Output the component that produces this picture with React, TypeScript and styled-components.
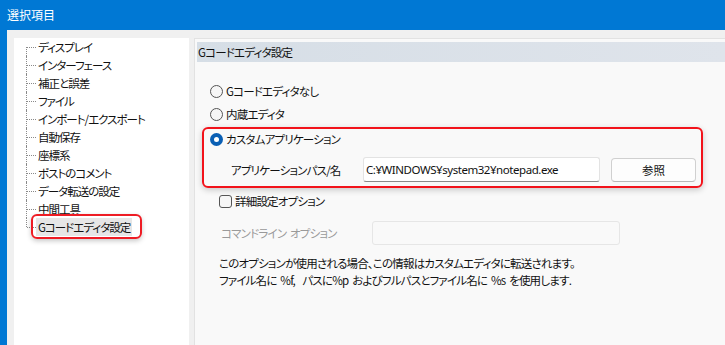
import React from "react";
import styled, { createGlobalStyle, css } from "styled-components";

const Global = createGlobalStyle`
  html, body { margin: 0; padding: 0; }
  body {
    font-family: "Noto Sans CJK JP", "Noto Sans", sans-serif;
    font-size: 11.5px;
    letter-spacing: -0.8px;
    word-spacing: 2px;
    color: #111;
    font-feature-settings: "palt";
    -webkit-font-smoothing: antialiased;
  }
`;

const Window = styled.div`
  width: 725px;
  height: 345px;
  background: #0078d4;
  display: flex;
  flex-direction: column;
  overflow: hidden;
`;

const TitleBar = styled.div`
  height: 30px;
  flex: none;
  display: flex;
  align-items: center;
  padding: 0 0 2px 7px;
  box-sizing: border-box;
  color: #fff;
  font-size: 12px;
  letter-spacing: 0;
`;

const Body = styled.div`
  flex: 1;
  margin-left: 7px;
  background: #f0f0f0;
  display: flex;
  gap: 5px;
  padding: 8px 0 0 7px;
  min-height: 0;
`;

const TreePanel = styled.div`
  width: 175px;
  flex: none;
  background: #fff;
  display: flex;
  flex-direction: column;
`;

const TreeRow = styled.div`
  height: 18px;
  display: flex;
  align-items: center;
`;

const Connector = styled.span<{ $first?: boolean; $last?: boolean }>`
  width: 22px;
  align-self: stretch;
  flex: none;
  position: relative;
  &::before {
    content: "";
    position: absolute;
    left: 12px;
    top: ${(p) => (p.$first ? "9px" : "0")};
    bottom: ${(p) => (p.$last ? "9px" : "0")};
    border-left: 1px dotted #8a8a8a;
  }
  &::after {
    content: "";
    position: absolute;
    left: 13px;
    width: 9px;
    top: 9px;
    border-top: 1px dotted #8a8a8a;
  }
`;

const TreeLabel = styled.span<{ $selected?: boolean }>`
  position: relative;
  height: 18px;
  line-height: 18px;
  padding: 0 2px;
  white-space: nowrap;
  letter-spacing: -1px;
  ${(p) =>
    p.$selected &&
    css`
      background: #e6e6e6;
      &::after {
        content: "";
        position: absolute;
        left: -5px;
        right: -10px;
        top: -4px;
        bottom: -3px;
        border: 2px solid #ee1c24;
        border-radius: 6px;
        box-shadow: 0 2px 5px rgba(0, 0, 0, 0.22);
      }
    `}
`;

const RightPanel = styled.div`
  flex: 1;
  background: #f9f9f9;
  border-left: 1px solid #e2e2e2;
  border-top: 1px solid #e2e2e2;
  padding: 3px 0 0 2px;
  display: flex;
  flex-direction: column;
`;

const Header = styled.div`
  height: 20px;
  line-height: 20px;
  padding-left: 1px;
  background: linear-gradient(90deg, #d6dee6, #dfe4eb);
  color: #111;
`;

const Content = styled.div`
  display: flex;
  flex-direction: column;
  padding-left: 13px;
`;

const OptionRow = styled.div<{ $mt?: number }>`
  height: 20px;
  display: flex;
  align-items: center;
  gap: 3px;
  margin-top: ${(p) => p.$mt ?? 0}px;
`;

const Radio = styled.span<{ $checked?: boolean }>`
  width: 13px;
  height: 13px;
  box-sizing: border-box;
  border-radius: 50%;
  flex: none;
  ${(p) =>
    p.$checked
      ? css`
          background: #0a5fb4;
          display: flex;
          align-items: center;
          justify-content: center;
          &::after {
            content: "";
            width: 5px;
            height: 5px;
            border-radius: 50%;
            background: #fff;
          }
        `
      : css`
          border: 1px solid #555;
          background: #f6f6f6;
        `}
`;

const HighlightBox = styled.div`
  margin-top: 3px;
  margin-left: -8px;
  width: 501px;
  box-sizing: border-box;
  border: 2px solid #f2131b;
  border-radius: 6px;
  box-shadow: 0 2px 6px rgba(0, 0, 0, 0.2);
  padding: 0 0 4px 6px;
  display: flex;
  flex-direction: column;
`;

const FieldRow = styled.div<{ $mt: number; $ml: number }>`
  display: flex;
  align-items: center;
  margin-top: ${(p) => p.$mt}px;
  margin-left: ${(p) => p.$ml}px;
`;

const FieldLabel = styled.span<{ $w: number; $disabled?: boolean }>`
  width: ${(p) => p.$w}px;
  flex: none;
  color: ${(p) => (p.$disabled ? "#9a9a9a" : "#111")};
  white-space: nowrap;
`;

const TextBox = styled.div<{ $w: number; $disabled?: boolean }>`
  width: ${(p) => p.$w}px;
  height: ${(p) => (p.$disabled ? 24 : 25)}px;
  box-sizing: border-box;
  border: 1px solid ${(p) => (p.$disabled ? "#e6e6e6" : "#e3e3e3")};
  ${(p) => !p.$disabled && css`border-bottom-color: #8a8a8a;`}
  border-radius: 3px;
  background: ${(p) => (p.$disabled ? "#f9f9f9" : "#fff")};
  padding-left: 2px;
  display: flex;
  align-items: center;
  font-family: "Noto Sans", "Noto Sans CJK JP", sans-serif;
  font-size: 11.5px;
  letter-spacing: -0.45px;
  color: #111;
  white-space: nowrap;
  overflow: hidden;
`;

const Button = styled.div`
  width: 85px;
  height: 24px;
  margin-left: 11px;
  box-sizing: border-box;
  border: 1px solid #d0d0d0;
  border-bottom-color: #b8b8b8;
  border-radius: 4px;
  background: #fdfdfd;
  display: flex;
  align-items: center;
  justify-content: center;
  color: #111;
  letter-spacing: 0;
`;

const CheckRow = styled.div`
  height: 16px;
  margin-top: 5px;
  margin-left: 9px;
  display: flex;
  align-items: center;
  gap: 3px;
`;

const Checkbox = styled.span`
  width: 13px;
  height: 13px;
  box-sizing: border-box;
  border: 1px solid #555;
  border-radius: 3px;
  background: #f6f6f6;
  flex: none;
`;

const Description = styled.div`
  margin-top: 10px;
  margin-left: 9px;
  line-height: 17px;
  color: #111;
  white-space: nowrap;
`;

const treeItems = [
  "ディスプレイ",
  "インターフェース",
  "補正と誤差",
  "ファイル",
  "インポート/エクスポート",
  "自動保存",
  "座標系",
  "ポストのコメント",
  "データ転送の設定",
  "中間工具",
  "Gコードエディタ設定",
];

export default function App() {
  return (
    <>
      <Global />
      <Window>
        <TitleBar>選択項目</TitleBar>
        <Body>
          <TreePanel>
            {treeItems.map((item, i) => (
              <TreeRow key={item}>
                <Connector $first={i === 0} $last={i === treeItems.length - 1} />
                <TreeLabel $selected={i === treeItems.length - 1}>{item}</TreeLabel>
              </TreeRow>
            ))}
          </TreePanel>
          <RightPanel>
            <Header>Gコードエディタ設定</Header>
            <Content>
              <OptionRow $mt={19}>
                <Radio />
                <span>Gコードエディタなし</span>
              </OptionRow>
              <OptionRow $mt={3}>
                <Radio />
                <span>内蔵エディタ</span>
              </OptionRow>
              <HighlightBox>
                <OptionRow>
                  <Radio $checked />
                  <span>カスタムアプリケーション</span>
                </OptionRow>
                <FieldRow $mt={8} $ml={21}>
                  <FieldLabel $w={132}>アプリケーションパス/名</FieldLabel>
                  <TextBox $w={237}>C:¥WINDOWS¥system32¥notepad.exe</TextBox>
                  <Button>参照</Button>
                </FieldRow>
              </HighlightBox>
              <CheckRow>
                <Checkbox />
                <span>詳細設定オプション</span>
              </CheckRow>
              <FieldRow $mt={12} $ml={11}>
                <FieldLabel $w={151} $disabled>
                  コマンドライン オプション
                </FieldLabel>
                <TextBox $w={248} $disabled />
              </FieldRow>
              <Description>
                このオプションが使用される場合、この情報はカスタムエディタに転送されます。
                <br />
                ファイル名に %f,&nbsp; パスに%p およびフルパスとファイル名に %s を使用します.
              </Description>
            </Content>
          </RightPanel>
        </Body>
      </Window>
    </>
  );
}
